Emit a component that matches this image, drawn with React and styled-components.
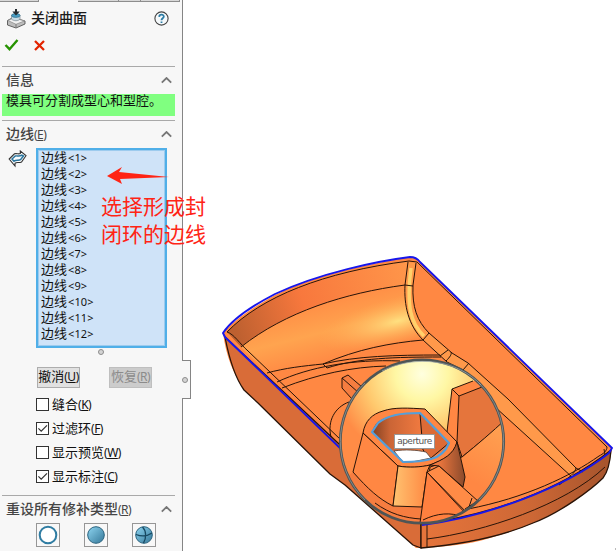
import React from 'react';
import styled, { createGlobalStyle } from 'styled-components';

const Global = createGlobalStyle`
  * { box-sizing: border-box; }
  body { margin: 0; background: #fff; font-family: "Noto Sans", "Noto Sans CJK SC", sans-serif; }
`;

const Screen = styled.main`
  position: relative;
  display: flex;
  width: 616px;
  height: 556px;
  overflow: hidden;
  background: #fff;
`;

const Panel = styled.aside`
  position: relative;
  flex: none;
  width: 183px;
  height: 551px;
  padding-left: 2px;
  background: #f7f7f7;
  border-right: 1px solid #858585;
`;

const TabStrip = styled.div`
  display: flex;
  height: 2px;
  margin-left: -2px;
`;

const TabEdge = styled.i`
  width: ${p => p.$w}px;
  height: 2px;
  background: ${p => (p.$open ? '#f7f7f7' : '#d8d8d8')};
  border-bottom: 1px solid ${p => (p.$open ? '#f7f7f7' : '#8d8d8d')};
  border-right: 1px solid ${p => (p.$open ? '#f7f7f7' : '#8d8d8d')};
`;

const Header = styled.header`
  display: flex;
  align-items: center;
  height: 32px;
  padding: 0 13px 0 4px;
`;

const Title = styled.h1`
  flex: 1;
  margin: 0 0 2px 4px;
  color: #1c1c1c;
  font: 500 14px/20px "Noto Sans CJK SC", sans-serif;
`;

const Actions = styled.div`
  display: flex;
  gap: 14px;
  height: 32px;
  padding: 4px 0 0 2px;
`;

const Section = styled.section`
  width: 173px;
  height: ${p => p.$h}px;
  border-top: 1px solid #a9a9a9;
`;

const SectionHead = styled.div`
  display: flex;
  align-items: center;
  justify-content: space-between;
  height: 27px;
  padding: 0 3px 0 4px;
`;

const Heading = styled.h2`
  margin: 0 0 3px;
  color: #454545;
  font: 500 14px/20px "Noto Sans CJK SC", sans-serif;
  white-space: nowrap;
`;

const Key = styled.span`
  font: 400 12px/1 "Noto Sans", sans-serif;
  letter-spacing: -0.5px;
`;

const Message = styled.p`
  height: 22px;
  margin: 0;
  padding-left: 4px;
  background: #80ff80;
  color: #111;
  font: 13px/12px "Noto Sans CJK SC", sans-serif;
  white-space: nowrap;
`;

const SelectRow = styled.div`
  display: flex;
  align-items: flex-start;
  gap: 9px;
  padding-left: 6px;
`;

const LoopSlot = styled.div`
  width: 19px;
  height: 20px;
  padding-top: 2px;
`;

const ListBox = styled.ul`
  width: 131px;
  height: 200px;
  margin: 0;
  padding: 0 0 0 2px;
  list-style: none;
  background: #cfe3f8;
  border: 2px solid #50afe8;
  box-shadow: inset 0 0 0 1px #9dcbee;
`;

const ListItem = styled.li`
  display: flex;
  align-items: center;
  height: 16px;
  padding-left: 1px;
  color: #111;
  font: 13px/14px "Noto Sans CJK SC", sans-serif;

  &:first-child { margin-top: -1px; }
`;

const Index = styled.span`
  margin: 2px 0 0 1px;
  font: 11px/12px "Noto Sans", sans-serif;
  letter-spacing: 0.1px;
`;

const Grip = styled.i`
  display: block;
  width: 6px;
  height: 6px;
  margin: ${p => p.$m || 0};
  border: 1px solid #8c8c8c;
  border-radius: 50%;
  background: #d4d4d4;
`;

const ButtonRow = styled.div`
  display: flex;
  gap: 29px;
  margin: 12px 0 4px 35px;
`;

const PushButton = styled.button`
  width: 43px;
  height: 21px;
  padding: 0 0 3px;
  color: ${p => (p.disabled ? '#8b8b8b' : '#111')};
  background: ${p => (p.disabled ? '#cccccc' : '#e1e1e1')};
  border: 1px solid ${p => (p.disabled ? '#bfbfbf' : '#adadad')};
  font: 13px/16px "Noto Sans CJK SC", sans-serif;
  white-space: nowrap;
`;

const CheckRow = styled.label`
  display: flex;
  align-items: center;
  gap: 3px;
  height: 24px;
  padding-left: 34px;
  color: #111;
  font: 13px/20px "Noto Sans CJK SC", sans-serif;
`;

const CheckText = styled.span`
  margin-bottom: 1px;
`;

const Box = styled.span`
  display: flex;
  width: 13px;
  height: 13px;
  background: #fff;
  border: 1px solid #333;
`;

const PatchRow = styled.div`
  display: flex;
  gap: 24px;
  padding-left: 34px;
`;

const PatchButton = styled.button`
  display: flex;
  align-items: center;
  justify-content: center;
  width: 24px;
  height: 24px;
  padding: 0;
  background: #f8f8f8;
  border: 1px solid #969696;
`;

const Flap = styled.div`
  position: absolute;
  left: 182px;
  top: 360px;
  display: flex;
  align-items: center;
  width: 9px;
  height: 39px;
  background: #f7f7f7;
  border: 1px solid #858585;
  border-left: 0;
`;

const Viewport = styled.section`
  flex: 1;
  height: 556px;
`;

const Note = styled.div`
  position: absolute;
  left: 101px;
  top: 191px;
  color: #ff2415;
  font: 21px/28px "Noto Sans CJK SC", sans-serif;
  white-space: nowrap;
`;

const Pointer = styled.svg`
  position: absolute;
  left: 106px;
  top: 166px;
`;

const Tip = styled.div`
  position: absolute;
  left: 394px;
  top: 434px;
  width: 41px;
  height: 15px;
  border: 1px solid #999;
  background: #fff;
  color: #555;
  text-align: center;
  font: 9px/13px "DejaVu Sans", sans-serif;
  letter-spacing: -0.5px;
`;

const Chevron = () => (
  <svg width="11" height="7" viewBox="0 0 11 7">
    <path d="M.8 5.7 5.5 1 10.2 5.7" fill="none" stroke="#777" strokeWidth="1.8" />
  </svg>
);

const CheckMark = () => (
  <svg width="11" height="11" viewBox="0 0 11 11">
    <path d="M1.4 5.4 4.2 8.2 10 2.3" fill="none" stroke="#333" strokeWidth="1.2" />
  </svg>
);

const ShutOffIcon = () => (
  <svg width="21" height="21" viewBox="0 0 21 21">
    <path d="M1.5 12.5 7 9.5 19 13v3L10 20l-8.5-3z" fill="#bdbdbd" stroke="#555" strokeWidth=".9" />
    <path d="m2 12.5 6-2.7L18.4 13 10 16.3z" fill="#f1f1f1" stroke="#888" strokeWidth=".7" />
    <path d="M10 16.3V19.5" stroke="#777" />
    <path d="M5.5 7v4c2 2.3 7 2.3 8.5 0V7z" fill="#c9dbe4" stroke="#75848c" strokeWidth=".7" />
    <ellipse cx="9.8" cy="7.5" rx="4.2" ry="1.9" fill="#4c9fc4" stroke="#2a6c8c" strokeWidth=".7" />
    <path d="M9 1h2v2.6h2.7L10 7.4 6.3 3.6H9z" fill="#252b30" />
  </svg>
);

const HelpIcon = () => (
  <svg width="15" height="15" viewBox="0 0 15 15">
    <circle cx="7.5" cy="7.5" r="6.6" fill="#f5f9fb" stroke="#444" strokeWidth="1.1" />
    <path d="M5.2 5.9C5.3 3 9.8 3 9.8 5.6 9.8 7.3 7.5 7.3 7.5 9.2M7.5 10.4v1.7" fill="none" stroke="#2c7ca5" strokeWidth="1.8" />
  </svg>
);

const LoopIcon = () => (
  <svg width="19" height="18" viewBox="0 0 19 18">
    <path d="M1.2 9 6.5 3.8C9 3 10.5 4.6 12.3 3.6V1L18 5.7 13.5 12C11 13.3 9 11.8 7 13.2V16z" fill="#fff" stroke="#333" strokeWidth="1.1" />
    <path d="M4 9 7.3 6C9 5.4 11 7 13.8 5.2L15.5 6 12.5 9.7C10.5 11 8.5 9.2 6 11.3z" fill="#f8fcff" stroke="#2b759d" strokeWidth="1.5" />
  </svg>
);

const Part = () => (
  <svg width="433" height="556" viewBox="183 0 433 556" fill="none" stroke="#281409" strokeWidth="1" strokeLinejoin="round">
    <defs>
      <linearGradient id="wall" x1="235" y1="330" x2="410" y2="270" gradientUnits="userSpaceOnUse">
        <stop stopColor="#bd6030" /><stop offset=".4" stopColor="#f8783d" /><stop offset="1" stopColor="#ff964a" />
      </linearGradient>
      <linearGradient id="cove" x1="325" y1="285" x2="345" y2="365" gradientUnits="userSpaceOnUse">
        <stop stopColor="#ff8341" /><stop offset=".55" stopColor="#ffa44f" /><stop offset="1" stopColor="#ff8341" />
      </linearGradient>
      <radialGradient id="shine" cx="0" cy="0" r="1" gradientUnits="userSpaceOnUse" gradientTransform="translate(398 321) rotate(-14) scale(82 24)">
        <stop stopColor="#ffe080" /><stop offset="1" stopColor="#ffad55" stopOpacity="0" />
      </radialGradient>
      <linearGradient id="front" x1="425" y1="0" x2="605" y2="0" gradientUnits="userSpaceOnUse">
        <stop stopColor="#e5743b" /><stop offset=".6" stopColor="#cc6735" /><stop offset="1" stopColor="#a8552d" />
      </linearGradient>
      <radialGradient id="dome" cx="422" cy="374" r="88" gradientUnits="userSpaceOnUse">
        <stop stopColor="#ffffdf" /><stop offset=".3" stopColor="#fff7a4" /><stop offset=".65" stopColor="#ffc86d" /><stop offset="1" stopColor="#ff8c46" />
      </radialGradient>
      <linearGradient id="bore" x1="373" y1="0" x2="422" y2="0" gradientUnits="userSpaceOnUse">
        <stop stopColor="#874322" /><stop offset=".35" stopColor="#cb6536" /><stop offset="1" stopColor="#f17a40" />
      </linearGradient>
      <linearGradient id="round" x1="438" y1="0" x2="466" y2="0" gradientUnits="userSpaceOnUse">
        <stop stopColor="#ef783e" /><stop offset="1" stopColor="#86482b" />
      </linearGradient>
      <linearGradient id="bright" x1="393" y1="0" x2="425" y2="0" gradientUnits="userSpaceOnUse">
        <stop stopColor="#ffc371" /><stop offset="1" stopColor="#ff8c45" />
      </linearGradient>
      <linearGradient id="floor" x1="500" y1="430" x2="470" y2="480" gradientUnits="userSpaceOnUse">
        <stop stopColor="#ff9f50" /><stop offset="1" stopColor="#ff8743" />
      </linearGradient>
      <clipPath id="lens"><circle cx="422" cy="441.5" r="81.5" /></clipPath>
    </defs>

    <path d="M223 333C233 321 250 309 275 295 304 281 340 269 410 257L417 259 612 448C609 470 603 478 588 491 560 514 522 529 490 538 467 545 443 547 416 548L246 390C233 376 226 355 223 333Z" fill="#ff8843" stroke="none" />
    <path d="M225 337 421 521V548L413 545 345 485 330 474 258 403 244 390C234 376 229 358 225 337Z" fill="#d96c38" strokeWidth="1.3" />
    <path d="M421 524C484 516 557 493 611 450 610 464 607 473 603 478 592 489 560 513 533 523 503 536 467 544 421 548Z" fill="url(#front)" strokeWidth="1.3" />
    <path d="M427 539C484 532 565 505 605 467M427 525V547" />

    <path d="M227 332C261 297 323 272 408 261L406 285C345 293 286 312 241 347Z" fill="url(#wall)" stroke="none" />
    <path d="M241 347C285 312 345 293 405 285 405 304 409 325 423 340L377 348 323 364 267 373Z" fill="url(#cove)" stroke="none" />
    <path d="M267 347C310 316 363 291 405 287 406 312 411 326 422 338 358 346 306 367 267 372Z" fill="url(#shine)" stroke="none" />
    <path d="M408 262 416 263 413 285C412 307 417 321 429 333L452 353 468 363 508 399 576 468 572 477 495 407 463 370 447 362 423 340C408 325 404 304 405 285Z" fill="#ff994a" stroke="none" />
    <path d="M411 268C406 307 411 324 424 336" stroke="#ffe477" strokeWidth="3.5" opacity=".75" />
    <path d="M408 262 405 285C404 305 408 325 423 340L447 362 463 370M416 263 413 285C412 307 417 321 429 333L452 353 468 363 508 399 576 468" />
    <path d="M405 285 413 286M423 340l6-7M440 356l8-6M446 361c4-4 6-7 5-9M463 370l6-7" />
    <path d="M227 332C261 297 323 272 409 261L417 262 607 447" />
    <path d="M241 347C285 312 345 293 405 285M323 364C358 349 390 343 423 340M267 373C285 368 303 366 323 364l4 4C358 358 395 357 441 357M323 364C357 356 395 355 440 355M277 382C309 367 353 359 400 361M282 388C318 374 352 367 386 366" />
    <path d="M227 332C234 334 240 344 248 351L341 440" />

    <path d="M495 407 572 477M576 468 583 472M576 468C575 473 570 477 559 485M607 447c0 4-4 7-8 9-28 20-74 42-131 53M604 449l1 6" />
    <path d="m342 378 6-3 14 12-10 12-10-11Z" fill="#f57d40" />
    <path d="m342 378 17 15" />
    <path d="M331 437c-4-16 4-30 18-35" />

    <g clipPath="url(#lens)">
      <rect x="340" y="360" width="165" height="165" fill="url(#dome)" stroke="none" />
      <path d="M473 381 452 389 447 432 457 442 462 457 506 421V381Z" fill="#ff8743" stroke="none" />
      <path d="M459 396 482 387 506 384V421L462 457 457 442Z" fill="#e5753c" />
      <path d="M473 381 452 389 459 396M452 389 447 432" />
      <path d="M462 457C478 444 492 432 506 419V530H422L430 467Z" fill="url(#floor)" />
      <path d="M353 472 393 506 422 507 424 525H385L343 480Z" fill="#f67d40" stroke="none" />
      <path d="M345 394V433" stroke="none" />
      <path d="M363 433C365 421 372 414 383 411 394 407 409 408 425 409L457 442C455 455 443 460 430 465 420 468 410 468 398 466Z" fill="#ff8743" />
      <path d="M363 433 398 466 393 506C379 499 368 489 353 472Z" fill="#ff8743" />
      <path d="M398 466C409 468 421 467 430 465L427 472 422 507 393 506Z" fill="url(#bright)" />
      <path d="M430 465C444 459 453 455 457 442L465 477 463 487 439 466Z" fill="url(#round)" />
      <path d="M372 432C376 420 382 415 420 413L449 443C443 456 427 459 403 462Z" fill="url(#bore)" stroke="none" />
      <path d="M420 414 423 450 431 458 449 443Z" fill="#dc6b36" />
      <path d="M394 451C405 449 417 450 426 452L431 458 412 462H403Z" fill="#fff" stroke="#6b5143" />
      <path d="M372 432 378 423C388 415 401 413 420 413L449 443C445 453 439 457 431 459 421 462 413 462 403 462Z" stroke="#549fda" strokeWidth="2.2" />
      <path d="M427 472 467 515 464 525 420 523Z" fill="#ff803f" />
      <path d="m427 472 12-6 40 36-7 16Z" fill="#ff8b46" />
      <path d="M375 503C390 514 405 518 421 519M423 520c14-7 28-8 40-3M464 511l12 5M472 498l-6 18M476 502l-11 7" />
    </g>
    <path d="M422 525C486 517 565 488 609 453L612 448 420 262C417 258 414 257 410 257 378 261 320 273 275 294 250 307 231 321 223 333L225 337 341 449" stroke="#1716eb" strokeWidth="1.9" />
    <circle cx="422" cy="441.5" r="81.7" stroke="#4e5555" strokeWidth="2.8" />
    <path d="M365 383A81.7 81.7 0 0 0 365 500M479 500A81.7 81.7 0 0 0 479 383" stroke="#929795" strokeWidth=".8" />
    <path d="M382 371C416 354 458 360 481 385" stroke="#a4adb0" strokeWidth=".7" />
    <path d="M615 549h1" stroke="#777" />
  </svg>
);

const checks = [['缝合', 'K', false], ['过滤环', 'F', true], ['显示预览', 'W', false], ['显示标注', 'C', true]];
const Accelerator = ({ value }) => <Key>(<u>{value}</u>)</Key>;

export default function App() {
  return (
    <Screen>
      <Global />
      <Panel>
        <TabStrip><TabEdge $w={39} /><TabEdge $w={39} $open /><TabEdge $w={41} /><TabEdge $w={22} /><TabEdge $w={39} /></TabStrip>
        <Header><ShutOffIcon /><Title>关闭曲面</Title><HelpIcon /></Header>
        <Actions>
          <svg width="15" height="14" viewBox="0 0 15 14"><path d="m1.5 7 4 4.2L13.5 2" fill="none" stroke="#269300" strokeWidth="2.4" /></svg>
          <svg width="14" height="14" viewBox="0 0 14 14"><path d="m2 3 9 9m0-9-9 9" stroke="#e22400" strokeWidth="2.3" /></svg>
        </Actions>
        <Section $h={54}>
          <SectionHead><Heading>信息</Heading><Chevron /></SectionHead>
          <Message>模具可分割成型心和型腔。</Message>
        </Section>
        <Section $h={375}>
          <SectionHead><Heading>边线<Accelerator value="E" /></Heading><Chevron /></SectionHead>
          <SelectRow>
            <LoopSlot><LoopIcon /></LoopSlot>
            <ListBox>{Array.from({ length: 12 }, (_, i) => <ListItem key={i}>边线<Index>&lt;{i + 1}&gt;</Index></ListItem>)}</ListBox>
          </SelectRow>
          <Grip $m="1px 0 0 96px" />
          <ButtonRow><PushButton>撤消<Accelerator value="U" /></PushButton><PushButton disabled>恢复<Accelerator value="R" /></PushButton></ButtonRow>
          {checks.map(([name, key, checked]) => (
            <CheckRow key={key}><Box>{checked && <CheckMark />}</Box><CheckText>{name}<Accelerator value={key} /></CheckText></CheckRow>
          ))}
        </Section>
        <Section $h={56}>
          <SectionHead><Heading>重设所有修补类型<Accelerator value="R" /></Heading><Chevron /></SectionHead>
          <PatchRow>
            {[0, 1, 2].map(n => (
              <PatchButton key={n}>
                <svg width="20" height="20" viewBox="0 0 20 20">
                  <defs><linearGradient id={`disc${n}`} x2="1" y2="1"><stop stopColor="#8ed5f1" /><stop offset="1" stopColor="#347798" /></linearGradient></defs>
                  <circle cx="10" cy="10" r="8.3" fill={n ? `url(#disc${n})` : '#fff'} stroke={n ? '#28627e' : '#2f7ca2'} strokeWidth={n ? 1 : 2} />
                  {n === 2 && <path d="M2 9.5c5 2 11 2 16-1.5M8.5 2c4 4 4 11 1 16" fill="none" stroke="#174860" strokeWidth="1.3" />}
                </svg>
              </PatchButton>
            ))}
          </PatchRow>
        </Section>
        <Flap><Grip /></Flap>
      </Panel>
      <Viewport><Part /></Viewport>
      <Pointer width="64" height="20" viewBox="0 0 64 20"><path d="M1 10 16 1 13 6 63 11 14 13 16 18Z" fill="#ff2415" /></Pointer>
      <Note>选择形成封<br />闭环的边线</Note>
      <Tip>aperture</Tip>
    </Screen>
  );
}
